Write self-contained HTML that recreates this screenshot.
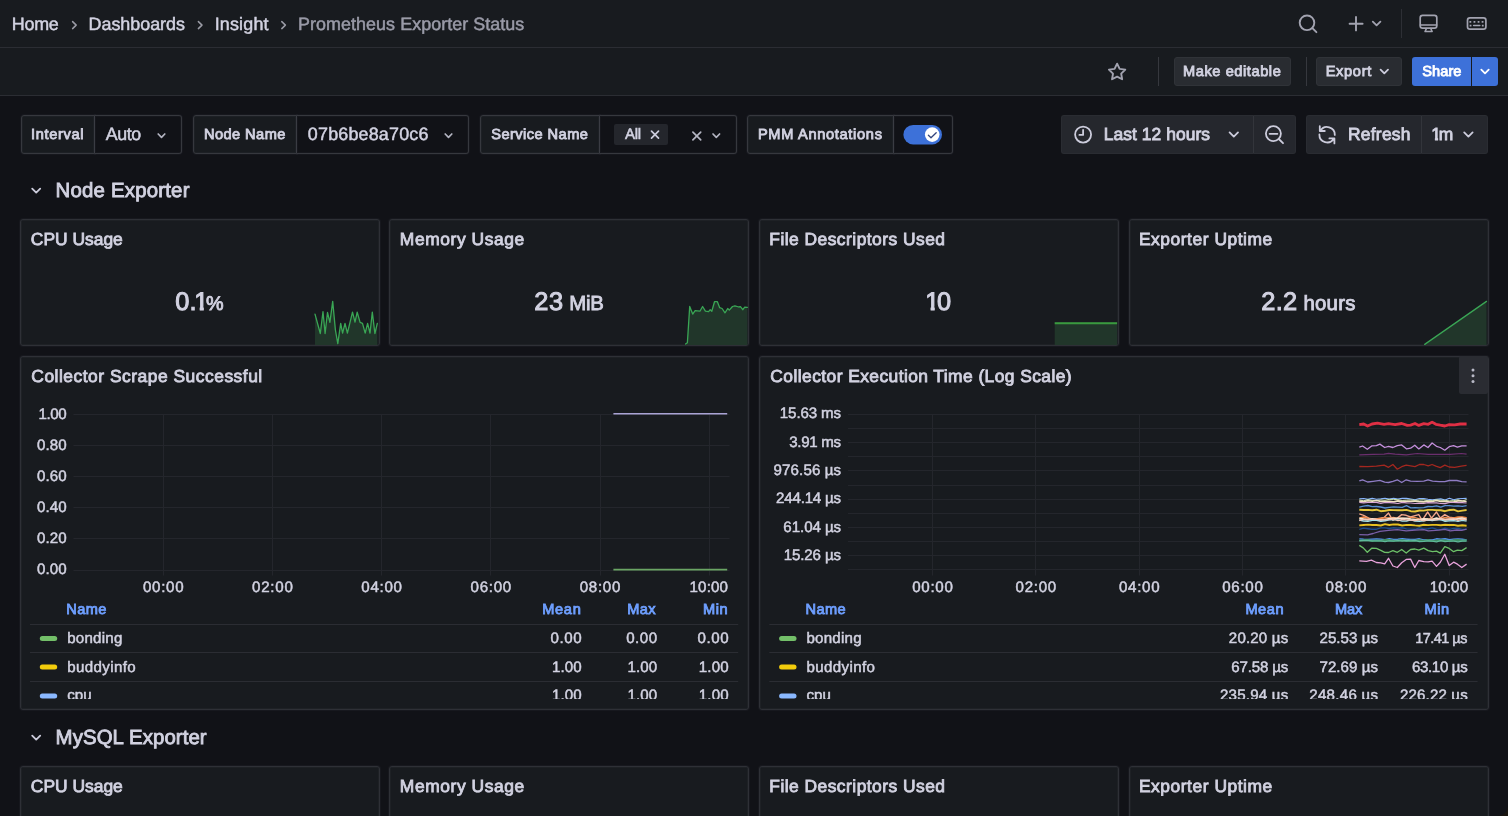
<!DOCTYPE html>
<html lang="en">
<head>
<meta charset="utf-8">
<title>Prometheus Exporter Status - Dashboards - Grafana</title>
<style>
*{box-sizing:border-box;margin:0;padding:0}
html,body{width:1508px;height:816px;overflow:hidden;background:#111217}
body{position:relative;font-family:"Liberation Sans",sans-serif;color:#ccccdc;font-size:15px}
.abs{position:absolute}
.t{position:absolute;white-space:nowrap;line-height:1;text-rendering:geometricPrecision}
#topbar{left:0;top:0;width:1508px;height:48px;background:#181b1f;border-bottom:1px solid #2b2d33}
#toolbar{left:0;top:48px;width:1508px;height:48px;background:#181b1f;border-bottom:1px solid #2b2d33}
.vbox{position:absolute;top:115px;height:39px;border:1px solid #36383e;background:#181b1f;box-shadow:0 0 0 1px rgba(204,204,220,0.03),inset 0 0 0 1px rgba(204,204,220,0.03)}
.vbox.val{background:#111217}
.vbox.l{border-radius:3px 0 0 3px}
.vbox.r{border-radius:0 3px 3px 0;border-left:none}
.btn{position:absolute;background:#25272d;border-radius:3px;border:1px solid #2a2c32}
.btn.tb{background:#292c31;border:1px solid #303338}
.panel{position:absolute;background:#181b1f;border:1px solid #2e3036;border-radius:3px;box-shadow:0 0 0 1px rgba(204,204,220,0.035),inset 0 0 0 1px rgba(204,204,220,0.035)}
.vdiv{position:absolute;width:1px;background:#36383e}
svg{position:absolute;left:0;top:0;overflow:visible}
.hl{position:absolute;height:1px;background:#2b2d33}
</style>
</head>
<body>
<div id="topbar" class="abs"></div>
<div id="toolbar" class="abs"></div>
<div class="vdiv" style="left:1401px;top:9px;height:29px;background:#2d2f35"></div>
<div class="vdiv" style="left:1158px;top:57px;height:29px"></div>
<div class="vdiv" style="left:1306px;top:57px;height:29px"></div>
<div class="btn tb" style="left:1174px;top:57px;width:117px;height:29px"></div>
<div class="btn tb" style="left:1316px;top:57px;width:86px;height:29px"></div>
<div class="btn" style="left:1412px;top:57px;width:59px;height:29px;background:#3d71d9;border:none;border-radius:3px 0 0 3px"></div>
<div class="btn" style="left:1472px;top:57px;width:26px;height:29px;background:#3d71d9;border:none;border-radius:0 3px 3px 0"></div>

<!-- VARIABLES -->
<div class="vbox l" style="left:21px;width:74px"></div>
<div class="vbox r val" style="left:95px;width:87px"></div>
<div class="vbox l" style="left:193px;width:104px"></div>
<div class="vbox r val" style="left:297px;width:172px"></div>
<div class="vbox l" style="left:480px;width:120px"></div>
<div class="vbox r val" style="left:600px;width:137px"></div>
<div class="abs" style="left:614px;top:124px;width:54px;height:21px;background:#24262c;border-radius:2px"></div>
<div class="vbox l" style="left:747px;width:147px"></div>
<div class="vbox r val" style="left:894px;width:59px"></div>

<!-- TIME PICKER -->
<div class="btn" style="left:1061px;top:115px;width:193px;height:39px;border-radius:3px 0 0 3px;border-right:1px solid #33353b"></div>
<div class="btn" style="left:1254px;top:115px;width:42px;height:39px;border-radius:0 3px 3px 0;border-left:none"></div>
<div class="btn" style="left:1306px;top:115px;width:116px;height:39px;border-radius:3px 0 0 3px;border-right:1px solid #33353b"></div>
<div class="btn" style="left:1422px;top:115px;width:66px;height:39px;border-radius:0 3px 3px 0;border-left:none"></div>

<!-- PANELS -->
<div class="panel" style="left:20px;top:219px;width:360px;height:127px"></div>
<div class="panel" style="left:389px;top:219px;width:360px;height:127px"></div>
<div class="panel" style="left:759px;top:219px;width:360px;height:127px"></div>
<div class="panel" style="left:1129px;top:219px;width:360px;height:127px"></div>
<div class="panel" style="left:20px;top:356px;width:729px;height:354px"></div>
<div class="panel" style="left:759px;top:356px;width:730px;height:354px"></div>
<div class="panel" style="left:20px;top:766px;width:360px;height:127px"></div>
<div class="panel" style="left:389px;top:766px;width:360px;height:127px"></div>
<div class="panel" style="left:759px;top:766px;width:360px;height:127px"></div>
<div class="panel" style="left:1129px;top:766px;width:360px;height:127px"></div>
<div class="abs" style="left:1459px;top:356px;width:29px;height:38px;background:#2a2c32;border-radius:2px"></div>

<svg width="1508" height="816" viewBox="0 0 1508 816" fill="none" stroke-linecap="round" stroke-linejoin="round">
<path d="M72.6,21.6 l3.6,3.5 l-3.6,3.5" stroke="#9a9ba5" stroke-width="1.5"/>
<path d="M198.4,21.6 l3.6,3.5 l-3.6,3.5" stroke="#9a9ba5" stroke-width="1.5"/>
<path d="M281.8,21.6 l3.6,3.5 l-3.6,3.5" stroke="#9a9ba5" stroke-width="1.5"/>
<circle cx="1307" cy="22.8" r="7.3" stroke="#a2a3b0" stroke-width="1.9"/><path d="M1312.4,28.2 L1316.4,32.2" stroke="#a2a3b0" stroke-width="1.9"/>
<path d="M1349.6,23.7 H1362.6 M1356,17.0 V30.4" stroke="#a2a3b0" stroke-width="1.9"/>
<path d="M1372.8,21.6 l3.8,3.8 l3.8,-3.8" stroke="#a2a3b0" stroke-width="1.8"/>
<rect x="1420.2" y="15.4" width="16.6" height="12.8" rx="2.4" stroke="#a2a3b0" stroke-width="1.7"/><path d="M1420.4,25.0 H1436.6" stroke="#a2a3b0" stroke-width="1.5"/><path d="M1426.4,28.6 L1425.0,31.6 H1432.2 L1430.8,28.6" stroke="#a2a3b0" stroke-width="1.5"/>
<rect x="1467.5" y="17.9" width="18.4" height="11.2" rx="2.4" stroke="#a2a3b0" stroke-width="1.7"/><path d="M1470.3,21.9 h0.1 M1474.4,21.9 h0.1 M1478.5,21.9 h0.1 M1482.5,21.9 h0.1 M1470.5,25.6 h0.1 M1482.7,25.6 h0.1" stroke="#a2a3b0" stroke-width="1.7" stroke-linecap="square"/><path d="M1473.6,25.6 H1479.8" stroke="#a2a3b0" stroke-width="1.5"/>
<polygon points="1117.10,63.70 1119.63,68.82 1125.28,69.64 1121.19,73.63 1122.15,79.26 1117.10,76.60 1112.05,79.26 1113.01,73.63 1108.92,69.64 1114.57,68.82" stroke="#a2a3b0" stroke-width="1.9"/>
<path d="M1380.6,69.6 l3.7,3.7 l3.7,-3.7" stroke="#ccccdc" stroke-width="1.8"/>
<path d="M1481.3,69.6 l3.7,3.7 l3.7,-3.7" stroke="#ffffff" stroke-width="1.8"/>
<path d="M158.2,134.0 l3.3,3.3 l3.3,-3.3" stroke="#b4b5c2" stroke-width="1.7"/>
<path d="M445.2,134.0 l3.3,3.3 l3.3,-3.3" stroke="#b4b5c2" stroke-width="1.7"/>
<path d="M713.0,134.0 l3.3,3.3 l3.3,-3.3" stroke="#b4b5c2" stroke-width="1.7"/>
<path d="M651.5,131.1 l7,7 M658.5,131.1 l-7,7" stroke="#ccccdc" stroke-width="1.7"/>
<path d="M692.9,132.1 l7.8,7.8 M700.7,132.1 l-7.8,7.8" stroke="#b4b5c2" stroke-width="1.7"/>
<rect x="903.4" y="125" width="38.6" height="19.4" rx="9.7" fill="#3d71d9"/><circle cx="932.2" cy="134.6" r="7.3" fill="#ffffff"/>
<path d="M928.4,135.2 l2.6,2.5 l5.2,-5.0" stroke="#34457d" stroke-width="1.3"/>
<circle cx="1083.1" cy="134.6" r="8" stroke="#ccccdc" stroke-width="1.8"/><path d="M1083.1,129.8 V134.9 H1079.4" stroke="#ccccdc" stroke-width="1.8"/>
<path d="M1229.6,132.4 l4.2,4.2 l4.2,-4.2" stroke="#ccccdc" stroke-width="1.8"/>
<circle cx="1273.4" cy="133.6" r="7.5" stroke="#ccccdc" stroke-width="1.8"/><path d="M1278.8,139 L1283,143.2 M1269.6,133.8 H1277.4" stroke="#ccccdc" stroke-width="1.8"/>
<path d="M1320.4,130.9 A7.7,7.7 0 0 1 1334.8,134.9 M1319.8,126.2 V131 H1324.8" stroke="#ccccdc" stroke-width="1.8"/>
<path d="M1319.4,134.5 A7.7,7.7 0 0 0 1333.8,138.5 M1329.4,138.4 H1334.4 V143.4" stroke="#ccccdc" stroke-width="1.8"/>
<path d="M1464.2,132.4 l4.2,4.2 l4.2,-4.2" stroke="#ccccdc" stroke-width="1.8"/>
<path d="M32.2,188.6 l4,4 l4,-4" stroke="#ccccdc" stroke-width="1.8"/>
<path d="M32.2,735.6 l4,4 l4,-4" stroke="#ccccdc" stroke-width="1.8"/>
<circle cx="1473" cy="369.9" r="1.5" fill="#b8b9c6"/>
<circle cx="1473" cy="375.7" r="1.5" fill="#b8b9c6"/>
<circle cx="1473" cy="381.4" r="1.5" fill="#b8b9c6"/>
<polygon points="315.0,314.1 320.3,333.5 323.0,311.7 325.1,333.5 327.5,312.5 329.9,322.4 332.7,301.4 335.4,330.0 337.8,343.6 340.7,323.3 342.6,333.2 345.0,323.3 347.4,333.2 352.5,312.2 355.0,322.1 357.2,312.2 360.1,322.4 362.5,323.3 365.2,333.2 367.6,323.3 370.0,333.2 372.3,312.2 374.9,333.5 377.3,323.3 377.3,345 315,345" fill="#21362a"/><polyline points="315.0,314.1 320.3,333.5 323.0,311.7 325.1,333.5 327.5,312.5 329.9,322.4 332.7,301.4 335.4,330.0 337.8,343.6 340.7,323.3 342.6,333.2 345.0,323.3 347.4,333.2 352.5,312.2 355.0,322.1 357.2,312.2 360.1,322.4 362.5,323.3 365.2,333.2 367.6,323.3 370.0,333.2 372.3,312.2 374.9,333.5 377.3,323.3" stroke="#3aa655" stroke-width="1.3"/>
<polygon points="685.5,344.0 687.4,342.8 689.7,306.5 692.7,314.1 695.1,310.6 699.9,311.2 702.6,306.5 705.4,311.2 708.6,311.7 710.2,309.7 711.8,311.2 714.5,301.7 717.4,301.7 719.7,307.7 722.1,308.5 725.0,312.8 727.7,308.5 729.3,310.1 732.5,306.5 734.9,305.8 738.8,307.0 740.4,306.6 742.8,309.7 744.7,307.1 747.3,307.4 747.3,345 685.5,345" fill="#21362a"/><polyline points="685.5,344.0 687.4,342.8 689.7,306.5 692.7,314.1 695.1,310.6 699.9,311.2 702.6,306.5 705.4,311.2 708.6,311.7 710.2,309.7 711.8,311.2 714.5,301.7 717.4,301.7 719.7,307.7 722.1,308.5 725.0,312.8 727.7,308.5 729.3,310.1 732.5,306.5 734.9,305.8 738.8,307.0 740.4,306.6 742.8,309.7 744.7,307.1 747.3,307.4" stroke="#3aa655" stroke-width="1.3"/>
<rect x="1054.7" y="322.2" width="62.4" height="22.8" fill="#21362a"/><path d="M1054.7,323.2 H1117.1" stroke="#3a9a3f" stroke-width="2" stroke-linecap="butt"/>
<polygon points="1424.7,345 1486.5,301.4 1486.5,345" fill="#21362a"/><path d="M1424.7,344.4 L1486.5,301.4" stroke="#3aa655" stroke-width="1.3"/>
<path d="M73.5,414.5 H729.5" stroke="#24262c" stroke-width="1" stroke-linecap="butt"/>
<path d="M73.5,445.5 H729.5" stroke="#24262c" stroke-width="1" stroke-linecap="butt"/>
<path d="M73.5,476.5 H729.5" stroke="#24262c" stroke-width="1" stroke-linecap="butt"/>
<path d="M73.5,507.5 H729.5" stroke="#24262c" stroke-width="1" stroke-linecap="butt"/>
<path d="M73.5,538.5 H729.5" stroke="#24262c" stroke-width="1" stroke-linecap="butt"/>
<path d="M73.5,570.5 H729.5" stroke="#24262c" stroke-width="1" stroke-linecap="butt"/>
<path d="M163.5,414 V575.5" stroke="#24262c" stroke-width="1" stroke-linecap="butt"/>
<path d="M272.5,414 V575.5" stroke="#24262c" stroke-width="1" stroke-linecap="butt"/>
<path d="M381.5,414 V575.5" stroke="#24262c" stroke-width="1" stroke-linecap="butt"/>
<path d="M490.5,414 V575.5" stroke="#24262c" stroke-width="1" stroke-linecap="butt"/>
<path d="M600.5,414 V575.5" stroke="#24262c" stroke-width="1" stroke-linecap="butt"/>
<path d="M709.5,414 V575.5" stroke="#24262c" stroke-width="1" stroke-linecap="butt"/>
<path d="M613.4,413.8 H727.2" stroke="#a9a3d4" stroke-width="1.6" stroke-linecap="butt"/>
<path d="M613.4,569.7 H727.2" stroke="#6aa564" stroke-width="1.8" stroke-linecap="butt"/>
<path d="M848,414.5 H1468.5" stroke="#24262c" stroke-width="1" stroke-linecap="butt"/>
<path d="M848,428.5 H1468.5" stroke="#24262c" stroke-width="1" stroke-linecap="butt"/>
<path d="M848,442.5 H1468.5" stroke="#24262c" stroke-width="1" stroke-linecap="butt"/>
<path d="M848,456.5 H1468.5" stroke="#24262c" stroke-width="1" stroke-linecap="butt"/>
<path d="M848,470.5 H1468.5" stroke="#24262c" stroke-width="1" stroke-linecap="butt"/>
<path d="M848,485.5 H1468.5" stroke="#24262c" stroke-width="1" stroke-linecap="butt"/>
<path d="M848,499.5 H1468.5" stroke="#24262c" stroke-width="1" stroke-linecap="butt"/>
<path d="M848,513.5 H1468.5" stroke="#24262c" stroke-width="1" stroke-linecap="butt"/>
<path d="M848,527.5 H1468.5" stroke="#24262c" stroke-width="1" stroke-linecap="butt"/>
<path d="M848,541.5 H1468.5" stroke="#24262c" stroke-width="1" stroke-linecap="butt"/>
<path d="M848,555.5 H1468.5" stroke="#24262c" stroke-width="1" stroke-linecap="butt"/>
<path d="M848,569.5 H1468.5" stroke="#24262c" stroke-width="1" stroke-linecap="butt"/>
<path d="M932.5,414 V575.5" stroke="#24262c" stroke-width="1" stroke-linecap="butt"/>
<path d="M1035.5,414 V575.5" stroke="#24262c" stroke-width="1" stroke-linecap="butt"/>
<path d="M1139.5,414 V575.5" stroke="#24262c" stroke-width="1" stroke-linecap="butt"/>
<path d="M1242.5,414 V575.5" stroke="#24262c" stroke-width="1" stroke-linecap="butt"/>
<path d="M1345.5,414 V575.5" stroke="#24262c" stroke-width="1" stroke-linecap="butt"/>
<path d="M1449.5,414 V575.5" stroke="#24262c" stroke-width="1" stroke-linecap="butt"/>
<polyline points="1359.3,424.6 1363.7,424.0 1367.6,426.0 1372.0,424.0 1377.5,423.2 1384.1,424.3 1388.5,423.7 1395.1,424.6 1401.7,423.5 1407.3,425.4 1410.6,425.1 1415.0,423.5 1418.8,425.4 1423.8,423.7 1428.2,424.3 1432.1,422.1 1435.9,424.3 1440.3,425.2 1444.8,426.0 1449.2,424.6 1454.7,424.8 1460.2,424.0 1466.6,424.0" stroke="#e02f44" stroke-width="2.8" stroke-linecap="butt"/>
<polyline points="1359.3,447.1 1362.6,446.0 1367.3,449.3 1372.0,445.8 1376.4,445.6 1379.9,444.1 1384.7,447.5 1388.5,446.3 1392.9,447.5 1397.3,445.6 1401.7,444.9 1406.7,448.9 1410.6,448.2 1414.8,445.2 1418.8,448.9 1423.8,444.9 1428.0,447.5 1432.1,443.0 1436.5,446.3 1440.3,447.5 1444.8,450.2 1449.2,446.7 1453.6,445.6 1457.4,447.1 1461.8,445.8 1466.6,445.8" stroke="#c48fdc" stroke-width="1.3" stroke-linecap="butt"/>
<polyline points="1359.3,454.8 1373.1,454.4 1384.1,454.1 1388.5,453.3 1395.1,454.1 1406.2,454.8 1417.2,453.5 1428.2,454.3 1439.2,454.3 1450.3,454.3 1461.3,453.5 1466.6,454.1" stroke="#6b2f6e" stroke-width="1.2" stroke-linecap="butt"/>
<polyline points="1359.3,466.5 1367.6,466.7 1376.4,466.2 1384.1,465.1 1388.5,467.3 1392.9,464.5 1397.3,469.2 1401.7,466.7 1406.2,465.1 1415.0,466.7 1419.4,464.5 1423.8,464.5 1428.2,465.9 1432.1,464.5 1435.9,466.2 1440.3,467.6 1444.8,465.1 1449.2,467.0 1454.7,467.3 1461.3,466.2 1466.6,465.4" stroke="#a3271f" stroke-width="1.3" stroke-linecap="butt"/>
<polyline points="1359.3,480.9 1362.6,479.8 1367.6,482.0 1373.1,481.3 1379.9,480.3 1384.7,482.2 1388.5,482.5 1392.9,481.3 1397.3,479.8 1401.7,482.5 1406.2,479.8 1410.6,481.1 1417.2,481.3 1423.8,481.1 1428.0,479.8 1432.6,481.1 1439.2,481.6 1444.8,481.6 1449.2,480.5 1456.9,480.5 1461.8,481.6 1466.6,481.9" stroke="#8f7cc4" stroke-width="1.3" stroke-linecap="butt"/>
<polyline points="1359.3,498.8 1363.6,498.5 1367.9,499.4 1372.2,498.4 1376.5,499.2 1380.8,498.9 1385.0,498.3 1389.3,499.1 1393.6,498.3 1397.9,499.0 1402.2,498.4 1406.5,498.4 1410.8,499.0 1415.1,499.7 1419.4,498.5 1423.7,498.6 1428.0,499.3 1432.3,499.9 1436.5,499.3 1440.8,498.9 1445.1,500.0 1449.4,498.3 1453.7,499.7 1458.0,498.7 1462.3,498.5 1466.6,498.4" stroke="#8ab8ff" stroke-width="1.1" stroke-linecap="butt"/>
<polyline points="1359.3,499.9 1363.6,500.8 1367.9,499.7 1372.2,500.4 1376.5,500.5 1380.8,500.0 1385.0,500.3 1389.3,499.4 1393.6,499.4 1397.9,499.7 1402.2,500.5 1406.5,500.1 1410.8,499.9 1415.1,500.4 1419.4,500.1 1423.7,499.9 1428.0,500.7 1432.3,500.6 1436.5,499.8 1440.8,500.3 1445.1,500.3 1449.4,500.9 1453.7,500.6 1458.0,499.8 1462.3,501.1 1466.6,499.5" stroke="#c8e6b0" stroke-width="1.0" stroke-linecap="butt"/>
<polyline points="1359.3,501.1 1363.6,501.6 1367.9,500.7 1372.2,501.2 1376.5,500.5 1380.8,501.5 1385.0,501.6 1389.3,501.3 1393.6,501.8 1397.9,500.9 1402.2,501.5 1406.5,501.4 1410.8,501.3 1415.1,501.1 1419.4,501.7 1423.7,501.9 1428.0,501.2 1432.3,501.5 1436.5,500.5 1440.8,501.5 1445.1,501.4 1449.4,502.0 1453.7,501.7 1458.0,500.9 1462.3,501.0 1466.6,501.5" stroke="#efe2c0" stroke-width="1.6" stroke-linecap="butt"/>
<polyline points="1359.3,502.3 1363.6,502.9 1367.9,502.5 1372.2,502.5 1376.5,502.4 1380.8,503.3 1385.0,502.5 1389.3,502.6 1393.6,502.8 1397.9,503.5 1402.2,502.4 1406.5,502.9 1410.8,503.0 1415.1,503.5 1419.4,503.4 1423.7,503.5 1428.0,502.7 1432.3,502.9 1436.5,502.8 1440.8,503.5 1445.1,503.6 1449.4,502.5 1453.7,502.5 1458.0,502.6 1462.3,502.6 1466.6,503.0" stroke="#d9a6d4" stroke-width="1.2" stroke-linecap="butt"/>
<polyline points="1359.3,507.1 1363.6,506.2 1367.9,505.5 1372.2,506.6 1376.5,506.5 1380.8,507.0 1385.0,508.0 1389.3,507.3 1393.6,506.9 1397.9,507.1 1402.2,507.3 1406.5,505.7 1410.8,507.9 1415.1,507.6 1419.4,507.8 1423.7,507.6 1428.0,506.5 1432.3,506.6 1436.5,505.8 1440.8,507.2 1445.1,505.7 1449.4,505.7 1453.7,506.1 1458.0,505.9 1462.3,506.4 1466.6,505.6" stroke="#5b8fd0" stroke-width="1.3" stroke-linecap="butt"/>
<polyline points="1359.3,509.7 1363.6,510.0 1367.9,509.9 1372.2,510.3 1376.5,509.7 1380.8,511.2 1385.0,510.8 1389.3,510.0 1393.6,510.1 1397.9,510.3 1402.2,510.3 1406.5,509.9 1410.8,511.2 1415.1,511.5 1419.4,510.5 1423.7,510.6 1428.0,509.9 1432.3,509.9 1436.5,510.3 1440.8,510.2 1445.1,511.2 1449.4,510.0 1453.7,509.7 1458.0,511.4 1462.3,510.6 1466.6,510.0" stroke="#e5c53a" stroke-width="1.9" stroke-linecap="butt"/>
<polyline points="1359.3,513.9 1363.7,515.3 1368.7,518.1 1373.1,519.2 1377.5,518.6 1384.1,517.5 1388.5,513.1 1392.9,520.3 1397.3,518.1 1401.7,514.6 1406.2,515.3 1410.6,517.0 1415.0,515.7 1418.8,514.6 1422.1,520.3 1427.7,512.0 1431.5,518.1 1436.5,512.0 1440.3,518.1 1444.8,514.6 1449.2,517.2 1454.7,517.9 1461.3,517.5 1466.6,518.1" stroke="#f2a68c" stroke-width="1.4" stroke-linecap="butt"/>
<polyline points="1359.3,518.2 1363.6,517.0 1367.9,518.1 1372.2,519.1 1376.5,518.9 1380.8,518.5 1385.0,517.6 1389.3,517.8 1393.6,517.3 1397.9,518.7 1402.2,518.2 1406.5,518.7 1410.8,517.7 1415.1,517.5 1419.4,518.8 1423.7,519.1 1428.0,518.9 1432.3,518.8 1436.5,518.8 1440.8,518.6 1445.1,517.5 1449.4,518.1 1453.7,517.8 1458.0,517.0 1462.3,517.0 1466.6,517.6" stroke="#f08a4b" stroke-width="1.3" stroke-linecap="butt"/>
<polyline points="1359.3,518.5 1363.6,519.3 1367.9,519.9 1372.2,518.9 1376.5,519.8 1380.8,519.9 1385.0,519.9 1389.3,518.7 1393.6,518.4 1397.9,518.4 1402.2,518.4 1406.5,518.4 1410.8,519.2 1415.1,519.8 1419.4,519.6 1423.7,518.9 1428.0,519.3 1432.3,519.6 1436.5,518.1 1440.8,519.3 1445.1,519.8 1449.4,519.5 1453.7,519.5 1458.0,518.9 1462.3,518.3 1466.6,519.5" stroke="#f6e6d4" stroke-width="1.9" stroke-linecap="butt"/>
<polyline points="1359.3,520.2 1363.6,521.0 1367.9,521.3 1372.2,520.3 1376.5,520.3 1380.8,521.3 1385.0,520.9 1389.3,519.9 1393.6,519.8 1397.9,519.9 1402.2,521.2 1406.5,521.0 1410.8,519.9 1415.1,521.1 1419.4,521.4 1423.7,520.8 1428.0,520.2 1432.3,520.6 1436.5,519.9 1440.8,519.6 1445.1,521.3 1449.4,520.8 1453.7,520.6 1458.0,521.3 1462.3,520.4 1466.6,521.2" stroke="#a6e3ea" stroke-width="1.3" stroke-linecap="butt"/>
<polyline points="1359.3,520.6 1363.6,519.2 1367.9,519.3 1372.2,519.4 1376.5,519.3 1380.8,520.0 1385.0,519.3 1389.3,519.7 1393.6,519.0 1397.9,520.7 1402.2,519.5 1406.5,519.8 1410.8,520.0 1415.1,520.7 1419.4,519.7 1423.7,520.8 1428.0,519.8 1432.3,519.9 1436.5,519.9 1440.8,518.8 1445.1,519.7 1449.4,519.1 1453.7,518.7 1458.0,520.5 1462.3,519.1 1466.6,519.8" stroke="#f4c7b8" stroke-width="1.3" stroke-linecap="butt"/>
<polyline points="1359.3,525.4 1363.6,525.0 1367.9,524.6 1372.2,525.0 1376.5,525.0 1380.8,525.5 1385.0,524.1 1389.3,525.0 1393.6,524.4 1397.9,524.5 1402.2,525.5 1406.5,524.9 1410.8,525.0 1415.1,525.4 1419.4,525.7 1423.7,524.8 1428.0,525.1 1432.3,524.9 1436.5,524.9 1440.8,525.3 1445.1,524.8 1449.4,525.0 1453.7,524.9 1458.0,525.8 1462.3,525.3 1466.6,525.7" stroke="#e8c020" stroke-width="1.9" stroke-linecap="butt"/>
<polyline points="1359.3,529.3 1363.6,528.1 1367.9,528.7 1372.2,529.3 1376.5,529.2 1380.8,527.9 1385.0,527.9 1389.3,528.5 1393.6,527.8 1397.9,528.1 1402.2,527.8 1406.5,528.9 1410.8,529.1 1415.1,529.3 1419.4,527.9 1423.7,528.9 1428.0,528.8 1432.3,527.9 1436.5,529.2 1440.8,529.4 1445.1,528.1 1449.4,529.4 1453.7,528.4 1458.0,528.5 1462.3,529.4 1466.6,529.1" stroke="#1f4e8c" stroke-width="1.4" stroke-linecap="butt"/>
<polyline points="1359.3,534.6 1367.6,534.8 1373.1,533.5 1379.9,531.3 1388.5,530.4 1397.3,529.7 1406.2,530.8 1415.0,530.2 1423.8,529.7 1428.2,530.8 1439.2,530.2 1444.8,529.3 1450.3,530.8 1456.9,530.0 1461.8,530.4 1466.6,529.1" stroke="#7a5fa8" stroke-width="1.3" stroke-linecap="butt"/>
<polyline points="1359.3,538.9 1363.6,539.3 1367.9,539.4 1372.2,539.1 1376.5,539.0 1380.8,539.1 1385.0,539.7 1389.3,538.7 1393.6,539.4 1397.9,539.3 1402.2,538.7 1406.5,539.1 1410.8,539.5 1415.1,539.4 1419.4,538.8 1423.7,540.0 1428.0,539.7 1432.3,540.0 1436.5,538.8 1440.8,539.1 1445.1,538.8 1449.4,539.7 1453.7,539.1 1458.0,538.9 1462.3,539.3 1466.6,539.9" stroke="#5794f2" stroke-width="1.4" stroke-linecap="butt"/>
<polyline points="1359.3,540.8 1363.6,540.2 1367.9,540.1 1372.2,540.9 1376.5,540.5 1380.8,540.7 1385.0,540.0 1389.3,540.0 1393.6,540.7 1397.9,540.4 1402.2,540.0 1406.5,540.9 1410.8,540.6 1415.1,540.8 1419.4,540.0 1423.7,540.9 1428.0,540.0 1432.3,540.9 1436.5,540.4 1440.8,540.3 1445.1,540.5 1449.4,540.9 1453.7,540.2 1458.0,540.1 1462.3,540.5 1466.6,540.2" stroke="#3f8f64" stroke-width="2.0" stroke-linecap="butt"/>
<polyline points="1359.3,540.6 1363.6,540.7 1367.9,540.5 1372.2,540.8 1376.5,540.9 1380.8,540.9 1385.0,541.6 1389.3,540.9 1393.6,541.2 1397.9,540.7 1402.2,541.0 1406.5,540.5 1410.8,540.9 1415.1,540.5 1419.4,541.6 1423.7,541.3 1428.0,540.8 1432.3,541.2 1436.5,541.9 1440.8,540.6 1445.1,541.7 1449.4,541.1 1453.7,541.2 1458.0,541.8 1462.3,541.1 1466.6,541.2" stroke="#5fb89a" stroke-width="1.3" stroke-linecap="butt"/>
<polyline points="1359.3,545.4 1363.2,547.9 1367.3,552.3 1372.0,548.1 1376.4,548.4 1380.8,550.3 1384.7,552.3 1388.5,552.5 1392.9,550.6 1397.3,552.3 1401.7,549.5 1406.2,553.1 1410.6,549.5 1415.0,549.0 1418.8,550.1 1423.8,548.1 1428.2,550.6 1432.6,551.7 1436.5,551.2 1440.3,553.1 1444.8,546.7 1449.2,548.4 1453.6,551.7 1457.4,550.1 1461.8,550.6 1466.6,547.6" stroke="#6cc068" stroke-width="1.3" stroke-linecap="butt"/>
<polyline points="1359.3,560.9 1366.5,561.3 1371.4,560.2 1376.4,562.5 1380.8,562.8 1384.7,563.8 1388.5,558.3 1392.9,566.0 1397.3,567.5 1401.7,562.7 1406.2,559.4 1410.6,559.1 1414.8,567.5 1418.8,560.5 1423.8,561.6 1428.2,561.9 1432.1,561.1 1436.5,566.4 1440.3,562.2 1444.8,554.2 1449.2,565.5 1453.6,562.2 1457.4,564.2 1461.8,567.5 1466.6,564.1" stroke="#e9a3dc" stroke-width="1.3" stroke-linecap="butt"/>
<path d="M30,624.5 H738.2" stroke="#2b2d33" stroke-width="1" stroke-linecap="butt"/>
<path d="M30,652.5 H738.2" stroke="#2b2d33" stroke-width="1" stroke-linecap="butt"/>
<path d="M30,681.5 H738.2" stroke="#2b2d33" stroke-width="1" stroke-linecap="butt"/>
<rect x="39.8" y="635.9" width="17.4" height="5" rx="2.5" fill="#73bf69"/>
<rect x="39.8" y="664.5" width="17.4" height="5" rx="2.5" fill="#f2cc0c"/>
<rect x="39.8" y="693.4" width="17.4" height="5" rx="2.5" fill="#8ab8ff"/>
<path d="M769.3,624.5 H1477.6" stroke="#2b2d33" stroke-width="1" stroke-linecap="butt"/>
<path d="M769.3,652.5 H1477.6" stroke="#2b2d33" stroke-width="1" stroke-linecap="butt"/>
<path d="M769.3,681.5 H1477.6" stroke="#2b2d33" stroke-width="1" stroke-linecap="butt"/>
<rect x="779.0999999999999" y="635.9" width="17.4" height="5" rx="2.5" fill="#73bf69"/>
<rect x="779.0999999999999" y="664.5" width="17.4" height="5" rx="2.5" fill="#f2cc0c"/>
<rect x="779.0999999999999" y="693.4" width="17.4" height="5" rx="2.5" fill="#8ab8ff"/>
<path d="M1508,806 V816 H1498 A10,10 0 0 0 1508,806 Z" fill="#1a1510" stroke="none"/>
</svg>
<div id="tx" class="abs" style="left:0;top:0;width:1508px;height:816px;will-change:transform">
<div id="lg" class="abs" style="left:0;top:0;width:1508px;height:699px;overflow:hidden">
<div class="t" style="left:67.15px;top:688px;font-size:15.10px;color:#d2d2e1;letter-spacing:0.029px;-webkit-text-stroke:0.5px #d2d2e1;">cpu</div>
<div class="t" style="left:806.45px;top:688px;font-size:15.10px;color:#d2d2e1;letter-spacing:0.029px;-webkit-text-stroke:0.5px #d2d2e1;">cpu</div>
<div class="t" style="left:551.95px;top:688px;font-size:15.10px;color:#d2d2e1;letter-spacing:0.106px;-webkit-text-stroke:0.5px #d2d2e1;">1.00</div>
<div class="t" style="left:627.55px;top:688px;font-size:15.10px;color:#d2d2e1;letter-spacing:0.106px;-webkit-text-stroke:0.5px #d2d2e1;">1.00</div>
<div class="t" style="left:698.85px;top:688px;font-size:15.10px;color:#d2d2e1;letter-spacing:0.106px;-webkit-text-stroke:0.5px #d2d2e1;">1.00</div>
<div class="t" style="left:1219.95px;top:688px;font-size:15.10px;color:#d2d2e1;letter-spacing:0.206px;-webkit-text-stroke:0.5px #d2d2e1;">235.94 µs</div>
<div class="t" style="left:1309.25px;top:688px;font-size:15.10px;color:#d2d2e1;letter-spacing:0.281px;-webkit-text-stroke:0.5px #d2d2e1;">248.46 µs</div>
<div class="t" style="left:1399.95px;top:688px;font-size:15.10px;color:#d2d2e1;letter-spacing:0.143px;-webkit-text-stroke:0.5px #d2d2e1;">226.22 µs</div>
</div>
<div class="t" style="left:11.75px;top:16px;font-size:17.90px;color:#d2d2e1;letter-spacing:-0.224px;-webkit-text-stroke:0.5px #d2d2e1;">Home</div>
<div class="t" style="left:88.55px;top:16px;font-size:17.90px;color:#d2d2e1;letter-spacing:-0.014px;-webkit-text-stroke:0.5px #d2d2e1;">Dashboards</div>
<div class="t" style="left:214.65px;top:16px;font-size:17.90px;color:#d2d2e1;letter-spacing:0.193px;-webkit-text-stroke:0.5px #d2d2e1;">Insight</div>
<div class="t" style="left:298.05px;top:16px;font-size:17.90px;color:#9a9ba8;letter-spacing:0.060px;-webkit-text-stroke:0.5px #9a9ba8;">Prometheus Exporter Status</div>
<div class="t" style="left:1183.03px;top:65px;font-size:14.60px;color:#d2d2e1;letter-spacing:0.575px;-webkit-text-stroke:0.85px #d2d2e1;">Make editable</div>
<div class="t" style="left:1325.72px;top:65px;font-size:14.60px;color:#d2d2e1;letter-spacing:0.665px;-webkit-text-stroke:0.85px #d2d2e1;">Export</div>
<div class="t" style="left:1422.33px;top:65px;font-size:14.60px;color:#ffffff;letter-spacing:0.031px;-webkit-text-stroke:0.85px #ffffff;">Share</div>
<div class="t" style="left:31.02px;top:128px;font-size:14.60px;color:#d2d2e1;letter-spacing:0.676px;-webkit-text-stroke:0.85px #d2d2e1;">Interval</div>
<div class="t" style="left:105.85px;top:126px;font-size:17.80px;color:#d2d2e1;letter-spacing:-0.463px;-webkit-text-stroke:0.5px #d2d2e1;">Auto</div>
<div class="t" style="left:203.93px;top:128px;font-size:14.60px;color:#d2d2e1;letter-spacing:0.449px;-webkit-text-stroke:0.85px #d2d2e1;">Node Name</div>
<div class="t" style="left:307.85px;top:126px;font-size:17.90px;color:#d2d2e1;letter-spacing:0.196px;-webkit-text-stroke:0.5px #d2d2e1;">07b6be8a70c6</div>
<div class="t" style="left:491.23px;top:128px;font-size:14.60px;color:#d2d2e1;letter-spacing:0.456px;-webkit-text-stroke:0.85px #d2d2e1;">Service Name</div>
<div class="t" style="left:624.95px;top:127px;font-size:15.10px;color:#d2d2e1;letter-spacing:-0.310px;-webkit-text-stroke:0.5px #d2d2e1;">All</div>
<div class="t" style="left:757.92px;top:128px;font-size:14.60px;color:#d2d2e1;letter-spacing:0.691px;-webkit-text-stroke:0.85px #d2d2e1;">PMM Annotations</div>
<div class="t" style="left:1103.72px;top:126px;font-size:17.40px;color:#d2d2e1;letter-spacing:0.080px;-webkit-text-stroke:0.85px #d2d2e1;">Last 12 hours</div>
<div class="t" style="left:1347.92px;top:126px;font-size:17.40px;color:#d2d2e1;letter-spacing:0.288px;-webkit-text-stroke:0.85px #d2d2e1;">Refresh</div>
<div class="t" style="left:1431.36px;top:126px;font-size:17.40px;color:#d2d2e1;-webkit-text-stroke:0.85px #d2d2e1;clip-path:polygon(0 -5px,100% -5px,100% 11.27px,6.74px 11.27px,6.74px 40px,3.55px 40px,3.55px 11.27px,0 11.27px);">1</div>
<div class="t" style="left:1438.78px;top:126px;font-size:17.40px;color:#d2d2e1;-webkit-text-stroke:0.85px #d2d2e1;">m</div>
<div class="t" style="left:55.62px;top:181px;font-size:20.40px;color:#d2d2e1;letter-spacing:0.197px;-webkit-text-stroke:0.85px #d2d2e1;">Node Exporter</div>
<div class="t" style="left:55.62px;top:728px;font-size:20.40px;color:#d2d2e1;letter-spacing:0.084px;-webkit-text-stroke:0.85px #d2d2e1;">MySQL Exporter</div>
<div class="t" style="left:30.82px;top:231px;font-size:17.40px;color:#d2d2e1;letter-spacing:0.013px;-webkit-text-stroke:0.85px #d2d2e1;">CPU Usage</div>
<div class="t" style="left:399.82px;top:231px;font-size:17.40px;color:#d2d2e1;letter-spacing:0.592px;-webkit-text-stroke:0.85px #d2d2e1;">Memory Usage</div>
<div class="t" style="left:769.33px;top:231px;font-size:17.40px;color:#d2d2e1;letter-spacing:0.470px;-webkit-text-stroke:0.85px #d2d2e1;">File Descriptors Used</div>
<div class="t" style="left:1138.92px;top:231px;font-size:17.40px;color:#d2d2e1;letter-spacing:0.549px;-webkit-text-stroke:0.85px #d2d2e1;">Exporter Uptime</div>
<div class="t" style="left:30.82px;top:778px;font-size:17.40px;color:#d2d2e1;letter-spacing:0.013px;-webkit-text-stroke:0.85px #d2d2e1;">CPU Usage</div>
<div class="t" style="left:399.82px;top:778px;font-size:17.40px;color:#d2d2e1;letter-spacing:0.592px;-webkit-text-stroke:0.85px #d2d2e1;">Memory Usage</div>
<div class="t" style="left:769.33px;top:778px;font-size:17.40px;color:#d2d2e1;letter-spacing:0.470px;-webkit-text-stroke:0.85px #d2d2e1;">File Descriptors Used</div>
<div class="t" style="left:1138.92px;top:778px;font-size:17.40px;color:#d2d2e1;letter-spacing:0.549px;-webkit-text-stroke:0.85px #d2d2e1;">Exporter Uptime</div>
<div class="t" style="left:31.32px;top:368px;font-size:17.40px;color:#d2d2e1;letter-spacing:0.517px;-webkit-text-stroke:0.85px #d2d2e1;">Collector Scrape Successful</div>
<div class="t" style="left:770.33px;top:368px;font-size:17.40px;color:#d2d2e1;letter-spacing:0.435px;-webkit-text-stroke:0.85px #d2d2e1;">Collector Execution Time (Log Scale)</div>
<div class="t" style="left:175.15px;top:290px;font-size:25.40px;color:#d2d2e1;-webkit-text-stroke:1.0px #d2d2e1;">0</div>
<div class="t" style="left:189.60px;top:290px;font-size:25.40px;color:#d2d2e1;-webkit-text-stroke:1.0px #d2d2e1;">.</div>
<div class="t" style="left:194.26px;top:290px;font-size:25.40px;color:#d2d2e1;-webkit-text-stroke:1.0px #d2d2e1;clip-path:polygon(0 -5px,100% -5px,100% 16.59px,9.54px 16.59px,9.54px 40px,5.49px 40px,5.49px 16.59px,0 16.59px);">1</div>
<div class="t" style="left:206.05px;top:295px;font-size:19.80px;color:#d2d2e1;-webkit-text-stroke:0.85px #d2d2e1;">%</div>
<div class="t" style="left:534.30px;top:290px;font-size:25.40px;color:#d2d2e1;letter-spacing:0.579px;-webkit-text-stroke:1.0px #d2d2e1;">23</div>
<div class="t" style="left:569.33px;top:294px;font-size:20.40px;color:#d2d2e1;letter-spacing:-0.283px;-webkit-text-stroke:0.85px #d2d2e1;">MiB</div>
<div class="t" style="left:925.16px;top:290px;font-size:25.40px;color:#d2d2e1;-webkit-text-stroke:1.0px #d2d2e1;clip-path:polygon(0 -5px,100% -5px,100% 16.59px,9.54px 16.59px,9.54px 40px,5.49px 40px,5.49px 16.59px,0 16.59px);">1</div>
<div class="t" style="left:937.05px;top:290px;font-size:25.40px;color:#d2d2e1;-webkit-text-stroke:1.0px #d2d2e1;">0</div>
<div class="t" style="left:1261.30px;top:290px;font-size:25.40px;color:#d2d2e1;letter-spacing:0.212px;-webkit-text-stroke:1.0px #d2d2e1;">2.2</div>
<div class="t" style="left:1303.42px;top:294px;font-size:20.40px;color:#d2d2e1;letter-spacing:0.235px;-webkit-text-stroke:0.85px #d2d2e1;">hours</div>
<div class="t" style="left:38.45px;top:407px;font-size:15.10px;color:#d2d2e1;letter-spacing:-0.394px;-webkit-text-stroke:0.5px #d2d2e1;">1.00</div>
<div class="t" style="left:36.95px;top:438px;font-size:15.10px;color:#d2d2e1;letter-spacing:0.106px;-webkit-text-stroke:0.5px #d2d2e1;">0.80</div>
<div class="t" style="left:36.95px;top:469px;font-size:15.10px;color:#d2d2e1;letter-spacing:0.106px;-webkit-text-stroke:0.5px #d2d2e1;">0.60</div>
<div class="t" style="left:36.95px;top:500px;font-size:15.10px;color:#d2d2e1;letter-spacing:0.106px;-webkit-text-stroke:0.5px #d2d2e1;">0.40</div>
<div class="t" style="left:36.95px;top:531px;font-size:15.10px;color:#d2d2e1;letter-spacing:0.106px;-webkit-text-stroke:0.5px #d2d2e1;">0.20</div>
<div class="t" style="left:36.95px;top:562px;font-size:15.10px;color:#d2d2e1;letter-spacing:0.106px;-webkit-text-stroke:0.5px #d2d2e1;">0.00</div>
<div class="t" style="left:142.90px;top:580px;font-size:15.10px;color:#d2d2e1;letter-spacing:0.731px;-webkit-text-stroke:0.5px #d2d2e1;">00:00</div>
<div class="t" style="left:252.10px;top:580px;font-size:15.10px;color:#d2d2e1;letter-spacing:0.731px;-webkit-text-stroke:0.5px #d2d2e1;">02:00</div>
<div class="t" style="left:361.30px;top:580px;font-size:15.10px;color:#d2d2e1;letter-spacing:0.731px;-webkit-text-stroke:0.5px #d2d2e1;">04:00</div>
<div class="t" style="left:470.50px;top:580px;font-size:15.10px;color:#d2d2e1;letter-spacing:0.731px;-webkit-text-stroke:0.5px #d2d2e1;">06:00</div>
<div class="t" style="left:579.70px;top:580px;font-size:15.10px;color:#d2d2e1;letter-spacing:0.731px;-webkit-text-stroke:0.5px #d2d2e1;">08:00</div>
<div class="t" style="left:689.55px;top:580px;font-size:15.10px;color:#d2d2e1;letter-spacing:0.156px;-webkit-text-stroke:0.5px #d2d2e1;">10:00</div>
<div class="t" style="left:779.85px;top:406px;font-size:15.10px;color:#d2d2e1;letter-spacing:-0.120px;-webkit-text-stroke:0.5px #d2d2e1;">15.63 ms</div>
<div class="t" style="left:789.25px;top:435px;font-size:15.10px;color:#d2d2e1;letter-spacing:-0.307px;-webkit-text-stroke:0.5px #d2d2e1;">3.91 ms</div>
<div class="t" style="left:773.55px;top:463px;font-size:15.10px;color:#d2d2e1;letter-spacing:0.118px;-webkit-text-stroke:0.5px #d2d2e1;">976.56 µs</div>
<div class="t" style="left:776.05px;top:491px;font-size:15.10px;color:#d2d2e1;letter-spacing:-0.194px;-webkit-text-stroke:0.5px #d2d2e1;">244.14 µs</div>
<div class="t" style="left:783.35px;top:520px;font-size:15.10px;color:#d2d2e1;letter-spacing:-0.066px;-webkit-text-stroke:0.5px #d2d2e1;">61.04 µs</div>
<div class="t" style="left:783.65px;top:548px;font-size:15.10px;color:#d2d2e1;letter-spacing:-0.109px;-webkit-text-stroke:0.5px #d2d2e1;">15.26 µs</div>
<div class="t" style="left:912.20px;top:580px;font-size:15.10px;color:#d2d2e1;letter-spacing:0.731px;-webkit-text-stroke:0.5px #d2d2e1;">00:00</div>
<div class="t" style="left:1015.50px;top:580px;font-size:15.10px;color:#d2d2e1;letter-spacing:0.731px;-webkit-text-stroke:0.5px #d2d2e1;">02:00</div>
<div class="t" style="left:1118.90px;top:580px;font-size:15.10px;color:#d2d2e1;letter-spacing:0.731px;-webkit-text-stroke:0.5px #d2d2e1;">04:00</div>
<div class="t" style="left:1222.20px;top:580px;font-size:15.10px;color:#d2d2e1;letter-spacing:0.731px;-webkit-text-stroke:0.5px #d2d2e1;">06:00</div>
<div class="t" style="left:1325.60px;top:580px;font-size:15.10px;color:#d2d2e1;letter-spacing:0.731px;-webkit-text-stroke:0.5px #d2d2e1;">08:00</div>
<div class="t" style="left:1429.65px;top:580px;font-size:15.10px;color:#d2d2e1;letter-spacing:0.156px;-webkit-text-stroke:0.5px #d2d2e1;">10:00</div>
<div class="t" style="left:66.33px;top:603px;font-size:14.60px;color:#6e9fff;letter-spacing:0.379px;-webkit-text-stroke:0.85px #6e9fff;">Name</div>
<div class="t" style="left:67.15px;top:631px;font-size:15.10px;color:#d2d2e1;letter-spacing:0.246px;-webkit-text-stroke:0.5px #d2d2e1;">bonding</div>
<div class="t" style="left:67.15px;top:660px;font-size:15.10px;color:#d2d2e1;letter-spacing:0.379px;-webkit-text-stroke:0.5px #d2d2e1;">buddyinfo</div>
<div class="t" style="left:805.62px;top:603px;font-size:14.60px;color:#6e9fff;letter-spacing:0.379px;-webkit-text-stroke:0.85px #6e9fff;">Name</div>
<div class="t" style="left:806.45px;top:631px;font-size:15.10px;color:#d2d2e1;letter-spacing:0.246px;-webkit-text-stroke:0.5px #d2d2e1;">bonding</div>
<div class="t" style="left:806.45px;top:660px;font-size:15.10px;color:#d2d2e1;letter-spacing:0.379px;-webkit-text-stroke:0.5px #d2d2e1;">buddyinfo</div>
<div class="t" style="left:542.23px;top:603px;font-size:14.60px;color:#6e9fff;letter-spacing:0.687px;-webkit-text-stroke:0.85px #6e9fff;">Mean</div>
<div class="t" style="left:627.33px;top:603px;font-size:14.60px;color:#6e9fff;letter-spacing:0.338px;-webkit-text-stroke:0.85px #6e9fff;">Max</div>
<div class="t" style="left:702.92px;top:603px;font-size:14.60px;color:#6e9fff;letter-spacing:0.626px;-webkit-text-stroke:0.85px #6e9fff;">Min</div>
<div class="t" style="left:550.55px;top:631px;font-size:15.10px;color:#d2d2e1;letter-spacing:0.573px;-webkit-text-stroke:0.5px #d2d2e1;">0.00</div>
<div class="t" style="left:626.15px;top:631px;font-size:15.10px;color:#d2d2e1;letter-spacing:0.573px;-webkit-text-stroke:0.5px #d2d2e1;">0.00</div>
<div class="t" style="left:697.45px;top:631px;font-size:15.10px;color:#d2d2e1;letter-spacing:0.573px;-webkit-text-stroke:0.5px #d2d2e1;">0.00</div>
<div class="t" style="left:551.95px;top:660px;font-size:15.10px;color:#d2d2e1;letter-spacing:0.106px;-webkit-text-stroke:0.5px #d2d2e1;">1.00</div>
<div class="t" style="left:627.55px;top:660px;font-size:15.10px;color:#d2d2e1;letter-spacing:0.106px;-webkit-text-stroke:0.5px #d2d2e1;">1.00</div>
<div class="t" style="left:698.85px;top:660px;font-size:15.10px;color:#d2d2e1;letter-spacing:0.106px;-webkit-text-stroke:0.5px #d2d2e1;">1.00</div>
<div class="t" style="left:1245.42px;top:603px;font-size:14.60px;color:#6e9fff;letter-spacing:0.554px;-webkit-text-stroke:0.85px #6e9fff;">Mean</div>
<div class="t" style="left:1334.92px;top:603px;font-size:14.60px;color:#6e9fff;letter-spacing:-0.062px;-webkit-text-stroke:0.85px #6e9fff;">Max</div>
<div class="t" style="left:1424.42px;top:603px;font-size:14.60px;color:#6e9fff;letter-spacing:0.626px;-webkit-text-stroke:0.85px #6e9fff;">Min</div>
<div class="t" style="left:1228.85px;top:631px;font-size:15.10px;color:#d2d2e1;letter-spacing:0.163px;-webkit-text-stroke:0.5px #d2d2e1;">20.20 µs</div>
<div class="t" style="left:1319.45px;top:631px;font-size:15.10px;color:#d2d2e1;letter-spacing:0.063px;-webkit-text-stroke:0.5px #d2d2e1;">25.53 µs</div>
<div class="t" style="left:1415.25px;top:632px;font-size:14.40px;color:#d2d2e1;letter-spacing:-0.486px;-webkit-text-stroke:0.5px #d2d2e1;">17.41 µs</div>
<div class="t" style="left:1231.25px;top:660px;font-size:15.10px;color:#d2d2e1;letter-spacing:-0.180px;-webkit-text-stroke:0.5px #d2d2e1;">67.58 µs</div>
<div class="t" style="left:1319.45px;top:660px;font-size:15.10px;color:#d2d2e1;letter-spacing:0.063px;-webkit-text-stroke:0.5px #d2d2e1;">72.69 µs</div>
<div class="t" style="left:1411.95px;top:660px;font-size:15.10px;color:#d2d2e1;letter-spacing:-0.352px;-webkit-text-stroke:0.5px #d2d2e1;">63.10 µs</div>
</div>
</body>
</html>
